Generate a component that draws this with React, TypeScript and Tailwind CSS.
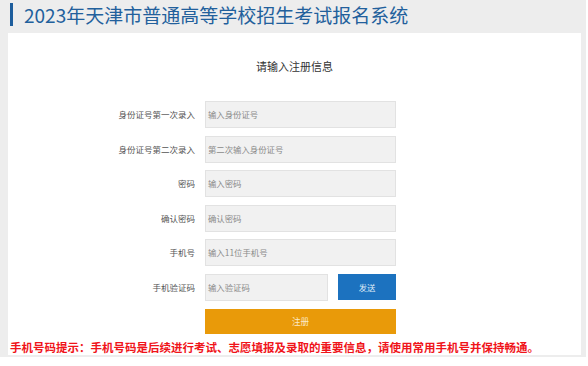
import React from "react";

const rows = [
  { label: "身份证号第一次录入", placeholder: "输入身份证号" },
  { label: "身份证号第二次录入", placeholder: "第二次输入身份证号" },
  { label: "密码", placeholder: "输入密码" },
  { label: "确认密码", placeholder: "确认密码" },
  { label: "手机号", placeholder: "输入11位手机号" },
];

const FormRow = ({
  label,
  children,
}: {
  label: string;
  children: React.ReactNode;
}) => (
  <div className="flex items-center h-[27px]">
    <span className="w-[197px] pr-[10px] text-right text-[8.5px] text-[#555]">
      {label}
    </span>
    {children}
  </div>
);

const Field = ({
  placeholder,
  className,
}: {
  placeholder: string;
  className: string;
}) => (
  <div
    className={`${className} h-[27px] flex items-center pl-[2px] bg-[#f1f1f1] border border-[#e2e2e2] text-[8.4px] text-[#8a8a8a]`}
  >
    {placeholder}
  </div>
);

export default function App() {
  return (
    <div
      className="w-[588px] h-[366px] bg-white overflow-hidden"
      style={{ fontFamily: '"Noto Sans CJK SC", "Noto Sans", sans-serif' }}
    >
      <div className="w-[586px] h-[357px] bg-[#ededed] flex flex-col">
        {/* header */}
        <div className="h-[33px] flex items-start">
          <div className="ml-[10px] mt-[3px] w-[3px] h-[23px] bg-[#1d5d9c]" />
          <h1 className="ml-[11px] mt-[1px] text-[19px] leading-[28px] text-[#22609c]">
            2023年天津市普通高等学校招生考试报名系统
          </h1>
        </div>

        {/* card */}
        <div className="ml-[8px] mr-[5px] h-[322px] bg-white flex flex-col">
          <p className="mt-[26px] text-center text-[11px] leading-[14px] text-[#333]">
            请输入注册信息
          </p>

          <div className="mt-[28px] flex flex-col gap-[7.5px]">
            {rows.map((r) => (
              <FormRow key={r.label} label={r.label}>
                <Field placeholder={r.placeholder} className="w-[191px]" />
              </FormRow>
            ))}
            <FormRow label="手机验证码">
              <Field placeholder="输入验证码" className="w-[123px]" />
              <button className="ml-[10px] w-[58px] h-[26px] bg-[#1c72bf] text-[8.4px] text-[#dfeaf6]">
                发送
              </button>
            </FormRow>
          </div>

          <div className="mt-[8px] flex">
            <button className="ml-[197px] w-[191px] h-[25px] bg-[#e99a09] text-[8.6px] text-[#fbe9c8]">
              注册
            </button>
          </div>

          <p className="mt-[6px] pl-[2px] text-[11.5px] leading-[14px] font-bold text-[#f0141a] whitespace-nowrap">
            手机号码提示：手机号码是后续进行考试、志愿填报及录取的重要信息，请使用常用手机号并保持畅通。
          </p>
        </div>
      </div>
    </div>
  );
}
